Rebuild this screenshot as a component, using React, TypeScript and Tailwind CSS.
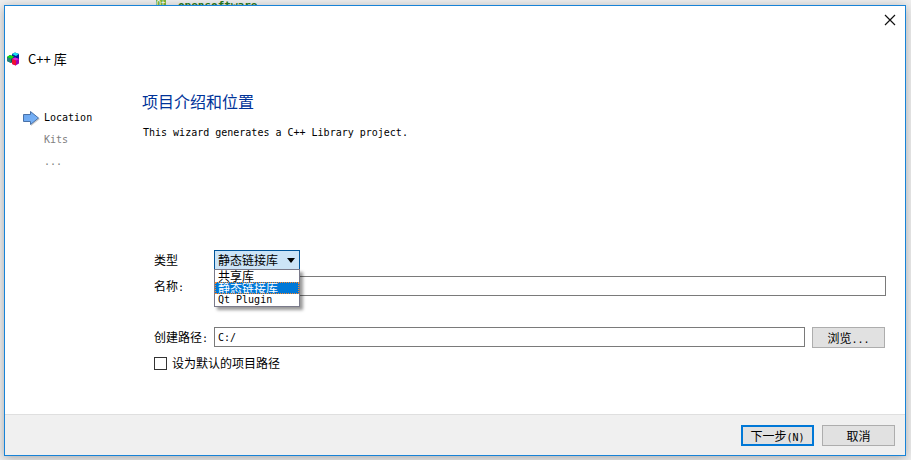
import { useState } from 'react';

const mono = "font-['DejaVu_Sans_Mono','Noto_Sans_CJK_SC',monospace] text-[10px]";
const hans = "font-['Noto_Sans_CJK_SC',sans-serif] text-xs";

const types = ['共享库', '静态链接库', 'Qt Plugin'];

function CubesIcon() {
  return (
    <svg width="13" height="14" viewBox="0 0 13 14" aria-hidden="true">
      <path d="M5 2 8 .5l4 1.500v5L9 9 5 7z" fill="#0020a0" />
      <path d="M5 2 8 .5l4 1.500L9 4z" fill="#19e0f0" />
      <path d="M0 5l3-2 4 1.500v5L4 11 0 9z" fill="#0c5c58" />
      <path d="M0 5l3-2 4 1.500L4 7z" fill="#10e010" />
      <path d="M0 5l4 2v4L0 9z" fill="#26807c" />
      <path d="M5 7l3-1.500L12 7v4.500L8.500 13.500 5 12z" fill="#a000b0" />
      <path d="M5 7l3-1.500L12 7 9 8.500z" fill="#f020d8" />
      <path d="M5 7l4 1.500v5L5 12z" fill="#f01030" />
    </svg>
  );
}

function ArrowIcon() {
  return (
    <svg width="17" height="15" viewBox="0 0 17 15" aria-hidden="true">
      <defs>
        <linearGradient id="arrow" x1="0" y1="0" x2="1" y2="1">
          <stop offset="0" stopColor="#69a5ee" />
          <stop offset="1" stopColor="#7db6fa" />
        </linearGradient>
      </defs>
      <path d="M1 5h7V2l9 6-9 7v-4H1z" fill="#cccccc" />
      <path d="M.5 3.500h7v-3L15.500 7l-8 6.500v-3h-7z" fill="url(#arrow)" stroke="#4a72a8" />
    </svg>
  );
}

export default function App() {
  const [type, setType] = useState('静态链接库');
  return (
    <div className={`flex h-screen flex-col overflow-hidden bg-[#efefef] pr-[5px] pb-1 pl-1 text-black ${mono}`}>
      <div className="flex h-[5px] shrink-0 items-start gap-3 pl-[152px] text-[#2b7a1e]">
        <span className="h-[5px] w-[10px] overflow-hidden bg-[#7db93c] text-center text-[8px] leading-[9px] text-white">Qt</span>
        <span className="h-[5px] overflow-hidden text-[11px] leading-3 font-bold">opensoftware</span>
      </div>
      <main className="relative flex min-h-0 flex-1 flex-col border border-[#1883d7] bg-white shadow-[0_2px_10px_rgba(0,0,0,0.3)]">
        <header className="flex flex-col">
          <button aria-label="关闭" className="mt-[7px] mr-2 flex size-[14px] items-center justify-center self-end">
            <svg width="12" height="12" viewBox="0 0 12 12" aria-hidden="true">
              <path d="M1 1l10 10M11 1L1 11" stroke="#111" strokeWidth="1.2" />
            </svg>
          </button>
          <div className="mt-[22px] flex h-5 items-center gap-2 pl-[2px] font-['Noto_Sans_CJK_SC',sans-serif] text-[13px]">
            <CubesIcon />
            <h1>C++ 库</h1>
          </div>
        </header>
        <div className="flex flex-1">
          <nav className="w-[137px] shrink-0 pt-[38px] pl-[18px] leading-[22px]">
            <ol>
              <li className="flex items-center gap-1"><ArrowIcon />Location</li>
              <li className="pl-[21px] text-[#808080]">Kits</li>
              <li className="pl-[21px] text-[#808080]">...</li>
            </ol>
          </nav>
          <section className="flex flex-1 flex-col pt-5 pr-[19px]">
            <h2 className="font-['Noto_Sans_CJK_SC',sans-serif] text-base leading-6 text-[#003399]">项目介绍和位置</h2>
            <p className="mt-3 pl-px leading-4">This wizard generates a C++ Library project.</p>
            <form className="mt-[109px] flex flex-col pl-3" onSubmit={(e) => e.preventDefault()}>
              <div className="flex h-5 items-center">
                <label htmlFor="type" className={`w-[60px] ${hans}`}>类型</label>
                <div className="relative">
                  <select
                    id="type"
                    value={type}
                    onChange={(e) => setType(e.target.value)}
                    className={`block h-5 w-[86px] appearance-none border border-[#005499] bg-[#cce4f7] pl-[3px] leading-[18px] ${hans}`}
                  >
                    {types.map((t) => <option key={t}>{t}</option>)}
                  </select>
                  <svg className="pointer-events-none absolute top-2 right-[5px]" width="8" height="5" viewBox="0 0 8 5" aria-hidden="true">
                    <path d="M0 0h8L4 5z" fill="#000" />
                  </svg>
                  <ul role="listbox" aria-label="类型" className="absolute top-[19px] left-0 z-10 w-[86px] border border-[#7a7a8a] bg-white shadow-[3px_3px_3px_rgba(0,0,0,0.4)]">
                    {types.map((t) => (
                      <li
                        key={t}
                        role="option"
                        aria-selected={t === type}
                        onClick={() => setType(t)}
                        className={`flex h-3 items-center overflow-hidden leading-3 ${t === 'Qt Plugin' ? mono : hans} ${t === type ? 'border border-dotted border-[#ff8728] bg-[#0078d7] pl-[2px] text-white' : 'pl-[3px]'}`}
                      >
                        {t}
                      </li>
                    ))}
                  </ul>
                </div>
              </div>
              <div className="mt-[6px] flex h-5 items-center">
                <label htmlFor="name" className={`w-[60px] ${hans}`}>名称<span className={mono}>:</span></label>
                <input id="name" className="h-5 min-w-0 flex-1 border border-[#7a7a7a] bg-white px-[3px]" />
              </div>
              <div className="mt-[31px] flex h-[21px] items-start">
                <label htmlFor="path" className={`w-[60px] leading-5 ${hans}`}>创建路径<span className={mono}>:</span></label>
                <input id="path" defaultValue="C:/" className="h-5 min-w-0 flex-1 border border-[#7a7a7a] bg-white px-[3px]" />
                <button type="button" className={`mr-px ml-[7px] h-[21px] w-[73px] border border-[#adadad] bg-[#e1e1e1] leading-[19px] ${hans}`}>浏览<span className={mono}>...</span></button>
              </div>
              <label className={`mt-[6px] flex h-[18px] items-center gap-[5px] ${hans}`}>
                <input type="checkbox" className="size-[13px] appearance-none border border-[#333] bg-white checked:bg-[#0078d7]" />
                设为默认的项目路径
              </label>
            </form>
          </section>
        </div>
        <footer className={`flex h-[41px] shrink-0 items-center justify-end gap-2 border-t border-[#dfdfdf] bg-[#f0f0f0] pr-[10px] ${hans}`}>
          <button className="h-[21px] w-[73px] border-2 border-[#0078d7] bg-[#e1e1e1] leading-[17px]">下一步<span className={mono}>(N)</span></button>
          <button className="h-[21px] w-[73px] border border-[#adadad] bg-[#e1e1e1] leading-[19px]">取消</button>
        </footer>
      </main>
    </div>
  );
}
